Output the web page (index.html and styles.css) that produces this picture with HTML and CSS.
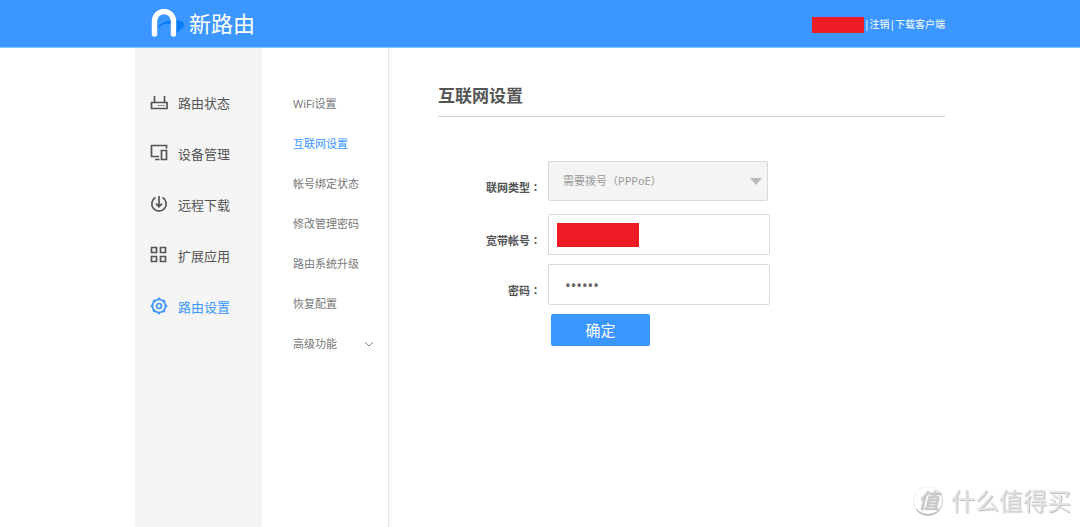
FILE: index.html
```html
<!DOCTYPE html>
<html lang="zh-CN">
<head>
<meta charset="utf-8">
<meta name="viewport" content="width=device-width, initial-scale=1">
<title>新路由 - 互联网设置</title>
<link rel="stylesheet" href="styles.css">
</head>
<body>
<header class="topbar">
  <div class="container topbar-inner">
    <a class="brand" href="#">
      <svg class="brand-mark" viewBox="0 0 34 28" aria-hidden="true">
        <path d="M5.500 20C9 13 17 11 23 11.500C28 11 33 12.500 33 15.500C33 19 28 22 23.500 26V17C17 13 11 15 5.500 20Z" fill="#0a7cf7"/>
        <path d="M3.500 25V12a9.500 9.500 0 0 1 19 0v13" fill="none" stroke="#fff" stroke-width="5.400" stroke-linecap="round"/>
      </svg>
      <span class="brand-name">新路由</span>
    </a>
    <nav class="account" aria-label="账户">
      <span class="account-name"></span>
      <span>|</span>
      <a href="#">注销</a>
      <span>|</span>
      <a href="#">下载客户端</a>
    </nav>
  </div>
</header>
<div class="container shell">
  <nav class="sidebar" aria-label="主菜单">
    <a class="side-link" href="#">
      <svg class="side-icon" viewBox="0 0 18 18" aria-hidden="true"><path d="M1.500 9.500h15.500v6H1.500zM4.500 9.500V3M14.500 9.500V3"/><path d="M8 12.500h1.500M10.500 12.500H12M13 12.500h1.500" stroke-width="1.200"/></svg>
      <span>路由状态</span>
    </a>
    <a class="side-link" href="#">
      <svg class="side-icon" viewBox="0 0 18 18" aria-hidden="true"><path d="M16.500 4.500V1.500H1.500V12.500H9M5 15.500H9.500M11.500 6.500h5v9h-5z"/></svg>
      <span>设备管理</span>
    </a>
    <a class="side-link" href="#">
      <svg class="side-icon" viewBox="0 0 18 18" aria-hidden="true"><path d="M5.500 2.600a7.200 7.200 0 1 0 7 0M9 1V11.500M5.800 8.500L9 11.700l3.200-3.200"/></svg>
      <span>远程下载</span>
    </a>
    <a class="side-link" href="#">
      <svg class="side-icon" viewBox="0 0 18 18" aria-hidden="true"><path d="M1.500 1.500h5v5h-5zM10.500 1.500h5v5h-5zM1.500 10.500h5v5h-5zM10.500 10.500h5v5h-5z"/></svg>
      <span>扩展应用</span>
    </a>
    <a class="side-link active" href="#" aria-current="page">
      <svg class="side-icon" viewBox="0 0 18 18" aria-hidden="true"><circle cx="9" cy="9" r="6.500"/><circle cx="9" cy="9" r="2.500"/><path stroke-width="1.500" d="M7.800 1.500h2.400M7.800 16.500h2.400M1.500 7.800v2.400M16.500 7.800v2.400M2.900 4.700l1.800-1.800M13.300 2.900l1.800 1.800M2.900 13.300l1.800 1.800M13.300 15.100l1.800-1.800"/></svg>
      <span>路由设置</span>
    </a>
  </nav>
  <nav class="submenu" aria-label="路由设置">
    <a class="sub-link" href="#">WiFi设置</a>
    <a class="sub-link active" href="#" aria-current="page">互联网设置</a>
    <a class="sub-link" href="#">帐号绑定状态</a>
    <a class="sub-link" href="#">修改管理密码</a>
    <a class="sub-link" href="#">路由系统升级</a>
    <a class="sub-link" href="#">恢复配置</a>
    <a class="sub-link" href="#">高级功能
      <svg class="chevron" viewBox="0 0 10 6" aria-hidden="true"><path d="M1 1l4 4 4-4"/></svg>
    </a>
  </nav>
  <main class="content">
    <h1 class="title">互联网设置</h1>
    <form class="form">
      <div class="row">
        <label class="label" for="type">联网类型<span class="colon" lang="zh-TW">：</span></label>
        <div class="field field-select">
          <select class="control select" id="type" disabled>
            <option>需要拨号（PPPoE）</option>
          </select>
          <svg class="caret" viewBox="0 0 12 7" aria-hidden="true"><path d="M0 0h12L6 7z"/></svg>
        </div>
      </div>
      <div class="row">
        <label class="label" for="user">宽带帐号<span class="colon" lang="zh-TW">：</span></label>
        <div class="field">
          <input class="control" id="user" type="text">
          <span class="mask"></span>
        </div>
      </div>
      <div class="row">
        <label class="label" for="pass">密码<span class="colon" lang="zh-TW">：</span></label>
        <div class="field">
          <input class="control password" id="pass" type="password" value="123456">
        </div>
      </div>
      <button class="submit" type="button">确定</button>
    </form>
  </main>
</div>
<div class="watermark">
  <span class="watermark-badge">值</span>
  <span>什么值得买</span>
</div>
</body>
</html>
```
FILE: styles.css
```css
* {
  box-sizing: border-box;
}

body {
  margin: 0;
  min-height: 100vh;
  display: flex;
  flex-direction: column;
  background: #fff;
  color: #666;
  font-family: "Noto Sans", "Noto Sans CJK SC", sans-serif;
  font-size: 11px;
  line-height: 16px;
}

a {
  color: inherit;
  text-decoration: none;
}

.container {
  width: 75%;
  min-width: 810px;
  margin: 0 auto;
}

.topbar {
  background: #3b97ff;
  border-bottom: 1px solid #8cc2ff;
  color: #fff;
}

.topbar-inner {
  height: 47px;
  display: flex;
  align-items: center;
  justify-content: space-between;
}

.brand {
  display: flex;
  align-items: center;
  gap: 4px;
  padding: 0 0 2px 16px;
}

.brand-mark {
  width: 34px;
  height: 28px;
}

.brand-name {
  font-size: 22px;
  line-height: 28px;
}

.account {
  display: flex;
  align-items: center;
  font-size: 10px;
}

.account-name {
  width: 52px;
  height: 16px;
  margin-top: 3px;
  background: #ee1c25;
}

.shell {
  flex: 1;
  display: flex;
}

.sidebar {
  flex: 0 0 127px;
  padding-top: 29px;
  background: #f5f5f5;
}

.side-link {
  display: flex;
  align-items: center;
  gap: 10px;
  height: 51px;
  padding-left: 15px;
  color: #555;
  font-size: 13px;
}

.side-icon {
  width: 18px;
  height: 18px;
  margin-bottom: 2px;
  fill: none;
  stroke: currentColor;
  stroke-width: 1.700;
}

.side-link.active,
.sub-link.active {
  color: #3b97ff;
}

.submenu {
  flex: 0 0 127px;
  padding-top: 36px;
  border-right: 1px solid #e6e6e6;
}

.sub-link {
  display: flex;
  align-items: center;
  justify-content: space-between;
  height: 40px;
  padding: 0 14px 0 31px;
  color: #777;
}

.chevron {
  width: 10px;
  height: 6px;
  fill: none;
  stroke: #888;
}

.content {
  flex: 1;
  padding: 35px 0 0 49px;
}

.title {
  margin: 0;
  padding-bottom: 7px;
  border-bottom: 1px solid #d2d2d2;
  color: #555;
  font-size: 17px;
  line-height: 26px;
}

.form {
  display: flex;
  flex-direction: column;
  gap: 9px;
  padding-top: 44px;
}

.row {
  display: flex;
  align-items: flex-start;
}

.label {
  width: 110px;
  padding: 18px 7px 0 0;
  color: #555;
  font-weight: 700;
  text-align: right;
}

.colon {
  font-family: "Noto Sans CJK TC", sans-serif;
}

.field {
  position: relative;
  width: 222px;
}

.field-select {
  width: 220px;
  margin-bottom: 4px;
}

.control {
  display: block;
  width: 100%;
  height: 41px;
  padding: 0 16px;
  border: 1px solid #d9d9d9;
  border-radius: 2px;
  background: #fff;
  color: #666;
  font: inherit;
}

.password {
  font-size: 15px;
}

.select {
  height: 40px;
  padding: 0 14px;
  appearance: none;
  background: #f4f4f4;
  color: #999;
  opacity: 1;
}

.caret {
  position: absolute;
  top: 17px;
  right: 6px;
  width: 12px;
  height: 7px;
  fill: #bbb;
}

.mask {
  position: absolute;
  top: 9px;
  left: 9px;
  width: 82px;
  height: 24px;
  background: #ee1c25;
}

.submit {
  width: 99px;
  height: 32px;
  margin-left: 113px;
  padding: 0;
  border: 0;
  border-radius: 2px;
  background: #3b97ff;
  color: #fff;
  font: inherit;
  font-size: 15px;
}

.watermark {
  position: fixed;
  right: 9px;
  bottom: 9px;
  display: flex;
  align-items: center;
  gap: 8px;
  color: #e4e4e4;
  font-size: 24px;
  line-height: 34px;
  text-shadow: 1px 1px 1px #bbb;
}

.watermark-badge {
  width: 30px;
  height: 30px;
  border: 1px solid #eee;
  border-right-color: #ccc;
  border-bottom: 2px solid #bbb;
  border-radius: 50%;
  color: #ccc;
  font-size: 21px;
  font-style: italic;
  line-height: 26px;
  text-align: center;
}
```
